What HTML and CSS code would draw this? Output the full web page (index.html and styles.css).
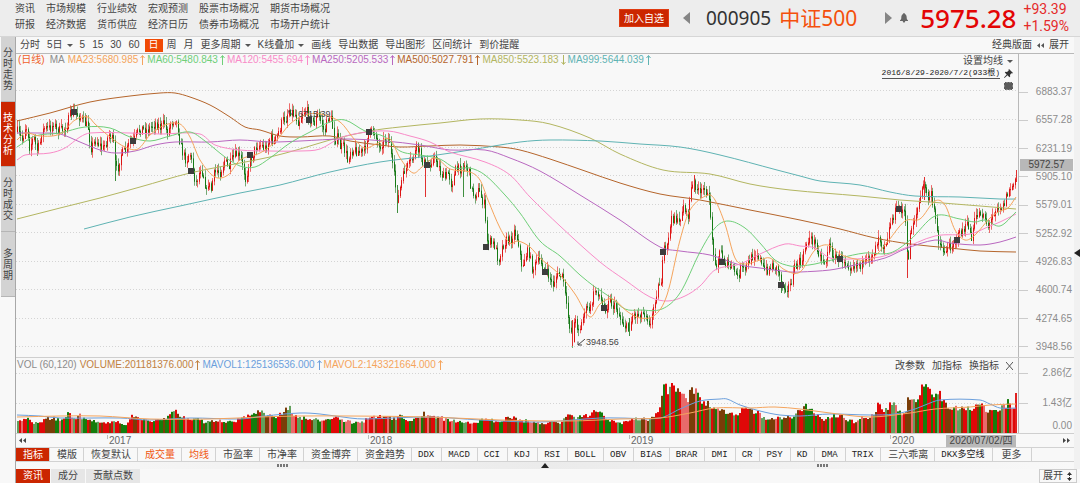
FILE: index.html
```html
<!DOCTYPE html>
<html lang="zh-CN">
<head>
<meta charset="utf-8">
<title>000905 中证500</title>
<link rel="stylesheet" href="styles.css">
</head>
<body>
<div class="app">
  <header class="header">
    <nav class="links">
      <a href="#">资讯</a><a href="#">市场规模</a><a href="#">行业绩效</a><a href="#">宏观预测</a><a href="#">股票市场概况</a><a href="#">期货市场概况</a>
      <a href="#">研报</a><a href="#">经济数据</a><a href="#">货币供应</a><a href="#">经济日历</a><a href="#">债券市场概况</a><a href="#">市场开户统计</a>
    </nav>
    <div class="quote">
      <button class="add">加入自选</button>
      <button class="step" aria-label="上一个"><svg width="7" height="12" viewBox="0 0 7 12"><path d="M7 0v12L0 6z" fill="#858585"/></svg></button>
      <span class="code">000905</span>
      <h1 class="name">中证500</h1>
      <button class="step" aria-label="下一个"><svg width="7" height="12" viewBox="0 0 7 12"><path d="M0 0v12l7-6z" fill="#858585"/></svg></button>
      <button class="bell" aria-label="提醒"><svg width="8" height="10" viewBox="0 0 8 10"><path d="M4 0c.6 0 .8.5.8 1C6.300 1.500 6.700 3 6.700 4.500 6.700 6 7 6.600 8 7.300V8H5.200c0 1-.5 1.600-1.200 1.600S2.800 9 2.800 8H0v-.7C1 6.600 1.300 6 1.300 4.500c0-1.500.4-3 1.900-3.500 0-.5.2-1 .8-1z" fill="#666"/></svg></button>
      <strong class="price">5975.28</strong>
      <div class="change"><span>+93.39</span><span>+1.59%</span></div>
    </div>
  </header>

  <div class="body">
    <nav class="side">
      <button class="side-tab">分时走势</button>
      <button class="side-tab on">技术分析</button>
      <button class="side-tab">分时成交</button>
      <button class="side-tab">多周期</button>
    </nav>

    <main class="main">
      <div class="toolbar">
        <button>分时</button>
        <button class="drop">5日</button>
        <button>5</button><button>15</button><button>30</button><button>60</button>
        <button class="on">日</button>
        <button>周</button><button>月</button>
        <button class="drop">更多周期</button>
        <button class="drop">K线叠加</button>
        <button>画线</button><button>导出数据</button><button>导出图形</button><button>区间统计</button><button>到价提醒</button>
        <span class="grow"></span>
        <button>经典版面</button>
        <svg width="7" height="5" viewBox="0 0 7 5"><path d="M3 0v5L0 2.500zM7 0v5L4 2.500z" fill="#555"/></svg>
        <button>展开</button>
      </div>

      <section class="pane price-pane">
        <div class="plot">
          <svg class="canvas" id="price" viewBox="16 54 1002 303" preserveAspectRatio="none"></svg>
          <div class="legend" id="ma"></div>
          <div class="settings">
            <button class="drop">设置均线</button>
            <div class="range"><a href="#">2016/8/29-2020/7/2(933根)</a>
              <svg width="9" height="9" viewBox="0 0 9 9"><path d="M5 0l4 4-1 .5-.7-.2L6 6l.2 1.500-.8.7L3.500 6.300.5 9 0 8.500 2.700 5.500.8 3.600l.7-.8L3 3l1.700-1.500L4.500.8z" fill="#333"/></svg>
            </div>
            <svg class="gear" width="9" height="8" viewBox="0 0 9 8"><path d="M1 0h7v1h1v6H8v1H1V7H0V1h1z" fill="#5c5c5c"/><path d="M3 0v1M6 0v1M3 7v1M6 7v1M0 4h1M8 4h1" stroke="#aaa"/></svg>
          </div>
          <span class="note high">↖ 6715.39</span>
          <span class="note low"><svg width="8" height="7" viewBox="0 0 8 7"><path d="M8 0L1 6M1 2.500V6h4" fill="none" stroke="#444"/></svg>3948.56</span>
        </div>
        <div class="scale">
          <span>6883.37</span><span>6557.28</span><span>6231.19</span><span>5905.10</span><span>5579.01</span><span>5252.92</span><span>4926.83</span><span>4600.74</span><span>4274.65</span><span>3948.56</span>
          <b class="cursor">5972.57</b>
        </div>
      </section>

      <section class="pane vol-pane">
        <div class="plot">
          <svg class="canvas" id="volume" viewBox="16 358 1002 75" preserveAspectRatio="none"></svg>
          <div class="legend" id="vol"></div>
          <div class="actions"><button>改参数</button><button>加指标</button><button>换指标</button><button aria-label="关闭"><svg width="7" height="8" viewBox="0 0 7 8"><path d="M0 0l7 8M7 0L0 8" stroke="#555" fill="none"/></svg></button></div>
        </div>
        <div class="scale"><span>2.86亿</span><span>1.43亿</span><span>0.00</span></div>
      </section>

      <div class="dates">
        <svg class="rew" width="7" height="5" viewBox="0 0 7 5"><path d="M3 0v5L0 2.500zM7 0v5L4 2.500z" fill="#444"/></svg>
        <span>2017</span><span>2018</span><span>2019</span><span>2020</span>
        <b>2020/07/02/四</b>
        <svg class="fwd" width="7" height="5" viewBox="0 0 7 5"><path d="M0 0v5l3-2.500zM4 0v5l3-2.500z" fill="#444"/></svg>
      </div>

      <div class="tabs">
        <button class="on">指标</button><button>模版</button><button>恢复默认</button><button class="hot">成交量</button><button class="hot">均线</button><button>市盈率</button><button>市净率</button><button>资金博弈</button><button>资金趋势</button><button class="en">DDX</button><button class="en">MACD</button><button class="en">CCI</button><button class="en">KDJ</button><button class="en">RSI</button><button class="en">BOLL</button><button class="en">OBV</button><button class="en">BIAS</button><button class="en">BRAR</button><button class="en">DMI</button><button class="en">CR</button><button class="en">PSY</button><button class="en">KD</button><button class="en">DMA</button><button class="en">TRIX</button><button>三六乖离</button><button class="en">DKX多空线</button><button class="more">更多</button>
      </div>

      <div class="splitter"><i class="grip"></i><svg width="8" height="5" viewBox="0 0 8 5"><path d="M4 0l4 5H0z" fill="#222"/></svg><i class="grip"></i></div>

      <div class="bottom">
        <button class="on">资讯</button><button>成分</button><button>贡献点数</button>
        <span class="grow"></span>
        <button class="unfold">展开 <svg width="7" height="9" viewBox="0 0 7 9"><path d="M3.500 0L6 3H4v1H3V3H1zM3 5h1v1h2L3.500 9 1 6h2z" fill="#333"/></svg></button>
      </div>
    </main>
    <button class="handle" aria-label="展开侧栏"><svg width="6" height="8" viewBox="0 0 6 8"><path d="M6 0v8L0 4z" fill="#222"/></svg></button>
  </div>
</div>
<script src="chart.js"></script>
</body>
</html>
```

FILE: styles.css
```css
* { box-sizing: border-box; }
body {
  margin: 0;
  background: #f8f8f8;
  color: #444;
  font: 10px/12px "Liberation Sans", "Noto Sans CJK SC", sans-serif;
}
button {
  margin: 0;
  padding: 0;
  border: 0;
  background: none;
  color: inherit;
  font: inherit;
  white-space: nowrap;
}
a { color: inherit; text-decoration: none; }
svg { display: block; flex: none; }
.app { display: flex; flex-direction: column; min-height: 100vh; }
.grow { flex: 1; }

.header {
  display: flex;
  justify-content: space-between;
  background: #ededed;
  border-bottom: 1px solid #d6d6d6;
  height: 37px;
}
.links {
  display: grid;
  grid-template-columns: repeat(6, auto);
  column-gap: 11px;
  align-content: start;
  padding: 1px 0 0 15px;
  line-height: 16px;
}
.quote { display: flex; align-items: center; white-space: nowrap; font-family: "Noto Sans", "Noto Sans CJK SC", sans-serif; }
.add { width: 50px; height: 18px; background: #cb2600; border: 1px solid #e03a10; color: #fff; margin-right: 14px; }
.code { font-size: 19px; color: #333; margin: 0 8px 0 16px; }
.name { font-size: 21px; font-weight: 400; line-height: 30px; color: #f4500c; margin: 0 28px 0 0; }
.bell { margin: 0 12px 0 8px; }
.price { font-size: 26px; font-weight: 500; line-height: 36px; color: #e30505; }
.change { display: flex; flex-direction: column; font: 14px/17px Roboto, "Noto Sans", sans-serif; color: #e52a2a; margin: 0 11px 0 7px; }

.body { flex: 1; display: grid; grid-template-columns: 16px 1fr 6px; }
.side { border-right: 1px solid #a8a8a8; padding-left: 1px; }
.side-tab {
  display: flex;
  align-items: center;
  justify-content: center;
  width: 14px;
  height: 65px;
  line-height: 11px;
  white-space: normal;
  padding: 0 2px;
  background: #d3d3d3;
  border-bottom: 1px solid #b5b5b5;
}
.side-tab.on { background: #cb2600; color: #fff; }
.main { min-width: 0; display: flex; flex-direction: column; }

.toolbar {
  display: flex;
  align-items: center;
  gap: 7px;
  height: 17px;
  padding: 0 5px 0 4px;
  border-bottom: 1px solid #b9b9b9;
  line-height: 16px;
}
.toolbar .on { width: 18px; height: 13px; line-height: 12px; background: #f04a05; color: #fff; margin: 0 -3px 0 -2px; }
.toolbar svg { margin: 0 -2px; }
.drop { display: flex; align-items: center; gap: 4px; }
.drop::after { content: ""; border: 3px solid transparent; border-top-color: #555; border-bottom: 0; }

.pane { display: grid; grid-template-columns: 1fr 56px; }
.price-pane { height: 304px; border-bottom: 1px solid #cfcfcf; }
.vol-pane { height: 76px; border-bottom: 1px solid #cfcfcf; }
.plot { position: relative; min-width: 0; }
.canvas { position: absolute; inset: 0; width: 100%; height: 100%; }
.legend { position: relative; display: flex; height: 12px; align-items: center; padding-left: 2px; white-space: nowrap; }
.legend span { display: flex; align-items: center; gap: 2px; margin-right: 2px; }
.legend .label { margin-right: 3px; color: #8c8c8c; }
.legend .period { color: #f0602a; margin-right: 5px; }
.vol-pane .legend { height: 14px; padding-left: 1px; }
.settings { position: absolute; top: 1px; right: 5px; display: flex; flex-direction: column; align-items: flex-end; gap: 1px; }
.range { display: flex; align-items: center; gap: 4px; font-family: "Liberation Mono", "Noto Sans CJK SC", monospace; font-size: 8px; line-height: 10px; color: #222; }
.range a { border-bottom: 1px solid #555; }
.settings .gear { margin-top: 2px; }
.note { position: absolute; display: flex; align-items: center; gap: 1px; font-size: 9px; }
.note.high { left: 27%; top: 54px; }
.note.low { left: 56%; top: 282px; }
.scale { position: relative; display: flex; flex-direction: column; justify-content: space-between; align-items: flex-end; border-left: 1px solid #b9b9b9; padding: 32px 2px 4px 0; color: #8c8c8c; }
.scale span { display: flex; width: 100%; justify-content: space-between; align-items: center; }
.scale span::before { content: ""; width: 9px; height: 1px; background: #ccc; }
.vol-pane .scale { justify-content: flex-start; gap: 18px; padding: 9px 2px 0 0; }
.vol-pane .scale span:last-child { margin-top: -7px; }
.vol-pane .scale span:last-child::before { background: none; }
.cursor { position: absolute; left: 1px; right: 1px; top: 105px; text-align: center; background: #b8b8b8; color: #444; font-weight: 400; }
.actions { position: absolute; top: 2px; right: 5px; display: flex; align-items: center; gap: 7px; }

.dates { display: grid; grid-template-columns: 91fr 261fr 261fr 261fr 54fr 74fr 56px; align-items: center; height: 13px; color: #666; }
.dates .rew { margin-left: 3px; }
.dates span { position: relative; padding-left: 2px; }
.dates span::before { content: ""; position: absolute; left: 0; top: 0; width: 1px; height: 4px; background: #bbb; }
.dates b { justify-self: center; width: 70px; text-align: center; background: #b8b8b8; font-weight: 400; color: #444; white-space: nowrap; }
.dates .fwd { justify-self: end; margin-right: 4px; }

.tabs { display: flex; height: 15px; border-top: 1px solid #d2d2d2; border-bottom: 1px solid #d2d2d2; line-height: 12px; }
.tabs button { padding: 0 6px 0 7px; border-right: 1px solid #d2d2d2; }
.tabs .en { padding: 0 7px 0 6px; font-family: "Liberation Mono", "Noto Sans CJK SC", monospace; font-size: 9px; color: #222; }
.tabs .more { padding: 0 9px; }
.tabs .hot { color: #f0560f; }
.tabs .on, .bottom .on { background: #cb2600; color: #fff; }
.splitter { display: grid; grid-template-columns: 1fr 1fr 1fr; justify-items: center; align-items: center; height: 7px; background: linear-gradient(90deg, #f8f8f8, #ebebeb, #f8f8f8); }
.grip { width: 11px; height: 3px; background: repeating-linear-gradient(90deg, #777 0 2px, transparent 2px 3px); }
.grip:first-child { margin-left: 180px; }
.grip:last-child { margin-right: 150px; }
.bottom { display: flex; height: 14px; line-height: 14px; }
.bottom button { padding: 0 7px; background: #e6e6e6; border-right: 1px solid #f8f8f8; }
.bottom .unfold { display: flex; align-items: center; gap: 3px; padding: 0 3px; border: 1px solid #ccc; background: #f8f8f8; line-height: 10px; margin-right: -3px; }
.handle { display: flex; align-items: center; height: 432px; background: #f1f1f1; }
```

FILE: chart.js
```js
const COLORS = {
  ma23: '#f5a45c', ma60: '#6fcf78', ma120: '#f98bc8', ma250: '#b968c0',
  ma500: '#b5652b', ma850: '#b3b661', ma999: '#5fb3b3', blue: '#6b9fdc'
};

function legend(id, head, items) {
  document.getElementById(id).innerHTML = head + items.map(([text, color, down]) =>
    `<span style="color:${color}">${text}<svg width="5" height="10" viewBox="0 0 5 10"><path d="${down ? 'M2.5 0v9M.5 7l2 2.500 2-2.500' : 'M2.5 10V1M.5 3l2-2.500 2 2.500'}" fill="none" stroke="${color}"/></svg></span>`).join('');
}
legend('ma', '<span class="period">(日线)</span><span class="label">MA</span>', [
  ['MA23:5680.985', COLORS.ma23], ['MA60:5480.843', COLORS.ma60], ['MA120:5455.694', COLORS.ma120],
  ['MA250:5205.533', COLORS.ma250], ['MA500:5027.791', COLORS.ma500], ['MA850:5523.183', COLORS.ma850, true],
  ['MA999:5644.039', COLORS.ma999]
]);
legend('vol', '<span class="label">VOL (60,120)</span>', [
  ['VOLUME:201181376.000', '#c08040'], ['MAVOL1:125136536.000', COLORS.blue], ['MAVOL2:143321664.000', COLORS.ma23]
]);

const parse = s => s.trim().split(/\s+/).map(p => p.split(',').map(Number));
let seed = 7;
const rnd = () => (seed = (seed * 16807) % 2147483647) / 2147483647;

function at(points, x) {
  let i = 1;
  while (i < points.length - 1 && points[i][0] < x) i++;
  const [x0, y0] = points[i - 1], [x1, y1] = points[i];
  return y0 + (y1 - y0) * Math.min(1, Math.max(0, (x - x0) / (x1 - x0)));
}

function smooth(points) {
  let d = `M${points[0]}`;
  for (let i = 0; i < points.length - 1; i++) {
    const a = points[Math.max(0, i - 1)], b = points[i], c = points[i + 1], e = points[Math.min(points.length - 1, i + 2)];
    const h = (c[0] - b[0]) / 3;
    const s1 = (c[1] - a[1]) / (c[0] - a[0]), s2 = (e[1] - b[1]) / (e[0] - b[0]);
    d += `C${b[0] + h},${(b[1] + s1 * h).toFixed(1)} ${c[0] - h},${(c[1] - s2 * h).toFixed(1)} ${c}`;
  }
  return d;
}
const line = (s, color) => `<path d="${smooth(parse(s))}" fill="none" stroke="${color}"/>`;
const grid = ys => ys.map(y => `<path d="M16 ${y}.5H1018" stroke="#d4d4d4" stroke-dasharray="1 2"/>`).join('');

const closes = parse(`17,131 20,137 22,140 25,125 27,130 29,146 32,140 34,138 36,150 39,145 41,132 44,128 48,128 51,127 53,122
56,130 60,130 64,128 66,126 70,113 74,112 78,115 82,120 86,125 88,128 90,148 92,145 95,140 98,143 102,149 105,143 109,133 113,143
115,170 118,166 120,154 123,152 126,150 130,140 133,141 138,130 142,128 146,130 150,127 155,123 160,127 164,122 166,132 168,130
170,123 175,118 177,127 180,145 183,155 186,160 189,152 192,165 195,183 197,178 200,168 203,175 206,192 208,180 210,192 213,175
216,170 220,172 224,160 228,168 232,158 236,154 240,158 243,170 245,178 248,165 252,155 256,145 260,145 265,148 270,137 274,142
278,132 282,120 286,118 288,109 292,112 295,115 298,122 302,112 306,110 310,120 314,122 317,114 320,120 324,132 328,115 331,120
334,140 337,137 340,148 342,145 345,152 347,160 350,150 355,150 360,152 364,150 367,135 370,132 375,132 378,148 382,142 386,138
389,140 391,160 394,178 397,202 400,185 404,170 408,165 412,158 416,148 419,152 422,160 425,165 428,165 432,158 436,160 440,172
444,178 448,172 451,185 455,170 460,168 465,165 468,170 471,190 474,195 478,190 482,200 484,205 486,240 490,242 494,245 498,260
502,245 506,240 510,240 514,230 518,242 521,268 525,255 528,250 532,270 536,262 540,260 544,270 548,275 552,285 556,275 560,275
563,280 565,300 568,320 572,338 574,318 576,325 580,328 584,310 590,308 594,290 598,292 602,305 606,308 608,298 612,305 616,308
620,318 624,325 628,330 632,315 638,314 645,312 650,325 654,300 658,285 661,278 663,250 666,250 668,235 671,220 674,215 678,225
682,208 684,205 687,220 690,190 694,182 697,190 700,195 704,185 708,200 711,220 712,255 716,262 720,250 724,262 728,265 734,270
737,278 740,268 744,270 748,262 754,252 758,255 762,268 766,270 772,265 778,270 781,285 786,287 790,285 794,268 798,262 802,262
804,248 808,238 812,240 816,245 820,258 825,262 828,245 834,258 840,258 846,262 850,266 856,263 864,265 868,258 874,250 878,235
882,245 886,240 890,222 895,210 900,208 904,212 905,225 907,262 908,255 910,228 914,218 918,205 921,192 924,182 927,200 930,192
932,205 936,222 938,240 942,250 946,250 950,245 955,240 960,232 964,228 968,225 971,240 975,215 980,212 984,215 988,228 992,215
996,205 1000,207 1003,205 1006,195 1010,188 1014,183 1016,178`);

let candles = '';
const wick = (x, a, b, c) => `<rect x="${x}" y="${a.toFixed(1)}" width="1" height="${Math.max(1, b - a).toFixed(1)}" fill="${c}"/>`;
let prev = at(closes, 16);
for (let x = 17; x <= 1016; x += 1.5) {
  const px = Math.round(x);
  const c = at(closes, x) + (rnd() - .5) * 9;
  const up = c < prev;
  const top = Math.min(c, prev), bot = Math.max(c, prev);
  candles += wick(px, top - 1 - rnd() * 6, bot + 1 + rnd() * 6, up ? '#ec6a6a' : '#74a874');
  candles += wick(px, top, bot + 1, up ? '#dc1414' : '#157a15');
  prev = c;
}
[[115, 160, 181, 0], [397, 185, 213, 0], [425, 165, 197, 1], [463, 163, 197, 0], [572, 320, 346, 1], [629, 318, 336, 0],
 [781, 283, 293, 0], [907, 252, 278, 1], [924, 177, 200, 1], [1016, 170, 182, 1], [694, 175, 192, 1]].forEach(([x, a, b, up]) => {
  candles += wick(x, a, b, up ? '#e03030' : '#3f8f3f');
});

const markers = [[74,112],[133,141],[191,171],[250,155],[309,120],[369,132],[427,165],[486,247],[545,272],[604,308],[663,252],[722,262],[781,285],[840,259],[899,209],[957,240]]
  .map(([x, y]) => `<rect x="${x - 3}" y="${y - 3}" width="6" height="6" fill="#3d3d3d"/>`).join('');

document.getElementById('price').innerHTML =
  grid([90, 119, 147, 175, 204, 232, 261, 289, 318, 346]) + candles +
  line('17,121 50,113 90,102 130,96 160,93 175,93 190,97 210,105 230,117 245,127 260,130 280,136 300,137 330,136 350,141 380,145 400,147 430,146 460,145 500,147 520,150 550,159 585,171 620,183 660,194 700,200 750,210 800,220 840,229 875,238 910,244 950,248 980,251 1016,252', COLORS.ma500) +
  line('17,219 60,208 100,198 140,187 190,173 240,163 270,157 300,149 330,140 370,131 400,127 440,123 480,119 520,120 550,124 590,138 620,154 663,170 710,174 750,184 790,190 860,196 900,200 930,202 980,206 1016,209', COLORS.ma850) +
  line('84,229 130,217 180,206 240,193 280,185 330,172 380,162 430,156 470,150 520,142 550,140 600,141 640,144 680,147 720,155 777,170 800,176 820,181 860,185 890,192 915,196 960,197 1000,199 1016,199', COLORS.ma999) +
  line('17,133 40,133 60,134 80,142 100,150 115,153 135,151 155,145 175,142 210,142 240,140 270,142 300,141 345,139 385,141 420,145 450,150 485,150 510,158 540,171 580,195 620,220 660,247 680,251 710,255 740,265 760,268 790,272 800,272 830,270 850,266 885,258 905,249 935,240 950,243 980,245 1000,242 1016,237', COLORS.ma250) +
  line('17,160 25,155 50,153 65,148 80,137 90,133 130,133 160,134 200,134 215,145 240,150 270,151 300,151 320,149 340,138 360,133 388,131 410,136 430,142 450,152 485,162 510,175 530,197 560,226 600,262 625,280 650,297 668,301 685,296 700,286 715,270 740,264 760,254 785,244 800,246 815,248 830,258 850,259 880,257 900,250 935,236 970,234 990,226 1000,222 1016,214', COLORS.ma120) +
  line('17,147 35,136 60,133 85,127 110,128 130,137 150,141 170,136 190,132 205,141 225,157 240,166 255,167 270,158 290,143 310,132 330,122 345,120 365,131 385,137 400,151 420,155 440,159 455,168 470,168 485,175 505,195 520,213 540,241 560,256 580,275 595,287 610,297 625,309 640,310 662,309 680,293 700,252 715,228 728,221 745,228 760,243 775,260 790,266 800,266 815,264 840,258 865,253 890,253 910,240 935,216 960,219 975,222 985,220 1000,226 1016,212', COLORS.ma60) +
  line('17,140 25,133 40,136 60,134 75,120 88,117 95,124 110,137 125,147 138,149 150,135 165,125 180,124 190,137 200,160 215,177 228,175 240,160 260,153 275,142 290,124 305,115 320,114 340,122 355,140 365,148 378,143 390,139 400,158 413,173 422,167 435,158 450,169 470,172 480,180 488,200 500,228 510,243 518,241 530,247 540,258 560,275 575,294 590,317 600,304 612,299 628,312 640,318 655,315 667,295 680,240 690,210 708,195 715,200 725,224 735,258 745,264 760,260 770,258 785,270 800,272 815,250 828,245 840,254 855,259 870,260 885,245 905,221 920,219 935,201 945,205 955,230 965,240 975,235 990,218 1000,211 1008,208 1016,197', COLORS.ma23) +
  markers;

const tops = parse(`17,421 25,417 30,421 38,424 45,418 52,418 60,420 64,417 68,408 72,418 79,415 85,420 92,420 100,421 108,423 115,421
125,425 130,416 140,418 150,420 160,419 168,415 172,408 178,416 184,417 195,419 205,422 215,420 225,421 235,420 240,415 247,415
255,414 260,408 265,413 272,417 280,414 288,405 292,413 305,419 320,420 335,418 350,422 360,422 370,417 380,416 390,418 400,416
408,421 415,416 421,417 423,409 425,417 435,416 445,419 455,421 465,421 475,423 485,418 495,421 510,417 520,420 540,423 550,422
560,422 567,415 575,418 583,414 588,418 592,408 597,411 603,416 610,420 620,424 630,418 640,418 650,419 655,412 660,403 663,382
667,395 672,376 675,388 680,398 682,393 687,397 690,388 694,387 698,398 702,400 710,405 717,409 725,411 735,414 742,409 747,411
755,411 765,420 780,417 790,417 797,411 803,405 808,409 815,414 825,420 832,415 840,414 847,420 855,422 860,416 868,421 877,405
885,409 891,403 895,406 900,412 905,410 907,396 913,402 919,395 924,379 928,388 935,392 940,395 945,404 955,408 960,409 970,408
978,405 988,409 995,410 1003,404 1008,402 1012,408 1016,402`);
const BARS = ['#e00808', '#e00808', '#7a3d08', '#e86a6a', '#157d0c', '#157d0c', '#7a3d08', '#e00808', '#62a05c'];
let bars = '', run = 0;
for (let x = 17; x < 1016; x += 2) {
  if (rnd() < .9) run = Math.floor(rnd() * BARS.length);
  const y = x > 1014 ? 393 : at(tops, x) + (rnd() - .4) * 7 * (433 - at(tops, x)) / 25;
  bars += `<rect x="${x}" y="${y.toFixed(1)}" width="2" height="${(433 - y).toFixed(1)}" fill="${x > 1014 ? '#e02020' : BARS[run]}"/>`;
}
document.getElementById('volume').innerHTML = grid([373, 403]) + bars +
  line('17,415 40,416 60,418 120,418 150,420 190,418 240,419 265,416 300,413 320,414 350,418 365,419 430,417 480,420 540,422 600,418 620,418 660,418 680,409 700,401 720,399 727,399 740,405 760,411 780,415 800,416 830,414 870,415 895,414 915,409 925,405 940,400 980,400 990,404 1000,408 1016,408', COLORS.blue) +
  line('17,417 60,416 100,416 150,419 210,419 260,417 300,416 350,416 430,417 500,420 570,421 620,419 660,418 690,413 715,408 750,408 775,407 800,409 830,413 870,417 910,413 935,409 970,407 990,405 1016,404', COLORS.ma23);
```
